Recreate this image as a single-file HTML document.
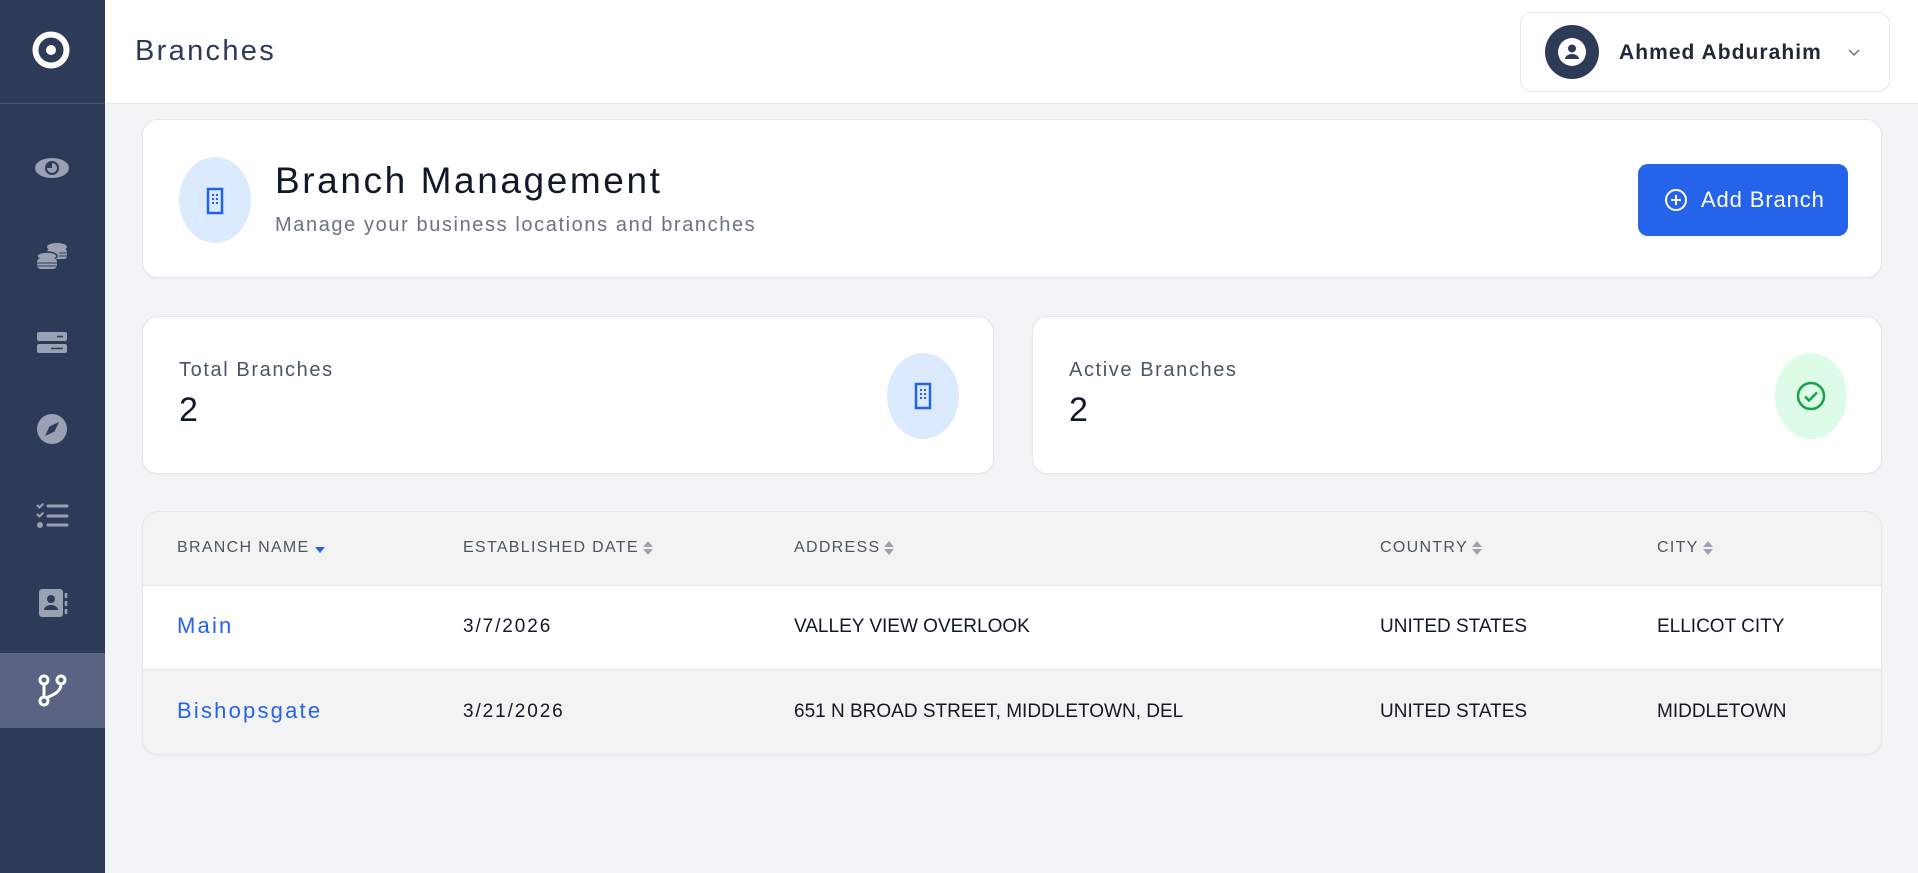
<!DOCTYPE html>
<html><head><meta charset="utf-8"><style>
*{box-sizing:border-box;margin:0;padding:0}
body{width:1918px;height:873px;overflow:hidden;background:#f3f4f6;font-family:"Liberation Sans",sans-serif;position:relative}
.sb{position:absolute;left:0;top:0;width:105px;height:873px;background:#2d3a58}
.sb .div{position:absolute;left:0;top:103px;width:105px;height:1px;background:#4a5675}
.sb .act{position:absolute;left:0;top:653px;width:105px;height:75px;background:#586481}
.ic{position:absolute;left:33px;width:38px;height:38px}
.hdr{position:absolute;left:105px;top:0;right:0;height:104px;background:#fff;border-bottom:1px solid #e5e7eb}
.card{position:absolute;background:#fff;border:1px solid #e5e7eb;border-radius:16px;box-shadow:0 1px 2px rgba(0,0,0,.04)}
.pill{position:absolute;border-radius:50%/50%}
.col{position:absolute;white-space:nowrap}
.h{font-size:16px;color:#4b5563;letter-spacing:1.3px;top:538px;display:flex;align-items:center;height:20px}
.h svg{margin-left:3px}
.r{font-size:19px;color:#111827}
.lnk{font-size:22px;color:#2563eb;letter-spacing:.1em}
.ls{letter-spacing:.08em}
.dt{letter-spacing:.1em}
</style></head><body>
<div class="sb">
 <svg class="ic" style="left:32px;top:31px" viewBox="0 0 38 38"><circle cx="19" cy="19" r="15.5" fill="none" stroke="#fff" stroke-width="6"/><circle cx="19" cy="19" r="5" fill="#fff"/></svg>
 <div class="div"></div>
 <div class="act"></div>
 <svg class="ic" style="top:149px" viewBox="0 0 38 38"><ellipse cx="19" cy="19" rx="17" ry="10" fill="#9aa1b2"/><circle cx="19" cy="19" r="7" fill="#2d3a58"/><path d="M19 14a5 5 0 1 1-5 5h5z" fill="#9aa1b2"/></svg>
 <svg class="ic" style="top:237px" viewBox="0 0 38 38"><ellipse cx="24" cy="10" rx="10" ry="4" fill="#9aa1b2"/><rect x="14" y="12" width="20" height="10" rx="3" fill="#9aa1b2"/><ellipse cx="14" cy="19" rx="10" ry="4" fill="#9aa1b2" stroke="#2d3a58" stroke-width="1.5"/><rect x="4" y="21" width="20" height="11" rx="4" fill="#9aa1b2"/><path d="M4 26h20M4 29h20M26 16h8M26 19h8" stroke="#2d3a58" stroke-width="1"/></svg>
 <svg class="ic" style="top:324px" viewBox="0 0 38 38"><rect x="4" y="8" width="30" height="9" rx="2" fill="#9aa1b2"/><rect x="4" y="20" width="30" height="9" rx="2" fill="#9aa1b2"/><path d="M24 12.5h6M18 24.5h12" stroke="#2d3a58" stroke-width="1.5"/></svg>
 <svg class="ic" style="top:410px" viewBox="0 0 38 38"><circle cx="19" cy="19" r="15" fill="#9aa1b2"/><path d="M26 12 L21.5 21.5 L12 26 L16.5 16.5Z" fill="#2d3a58"/></svg>
 <svg class="ic" style="top:497px" viewBox="0 0 38 38"><path d="M4 8l2.5 2.5 4-4M4 17l2.5 2.5 4-4" stroke="#9aa1b2" stroke-width="2" fill="none"/><circle cx="7" cy="28" r="3" fill="#9aa1b2"/><path d="M15 9h19M15 19h19M15 28h19" stroke="#9aa1b2" stroke-width="3" stroke-linecap="round"/></svg>
 <svg class="ic" style="top:584px" viewBox="0 0 38 38"><rect x="6" y="5" width="24" height="28" rx="3" fill="#9aa1b2"/><circle cx="18" cy="15" r="4" fill="#2d3a58"/><path d="M11 26a7 5 0 0 1 14 0z" fill="#2d3a58"/><path d="M33 9v5M33 17v5M33 25v5" stroke="#9aa1b2" stroke-width="2.5"/></svg>
 <svg class="ic" style="top:671px" viewBox="0 0 38 38"><circle cx="11" cy="9" r="4" fill="none" stroke="#fff" stroke-width="3"/><circle cx="11" cy="30" r="4" fill="none" stroke="#fff" stroke-width="3"/><circle cx="28" cy="9" r="4" fill="none" stroke="#fff" stroke-width="3"/><path d="M11 13v13M28 13c0 8-8 11-15 14" stroke="#fff" stroke-width="3" fill="none"/></svg>
</div>
<div class="hdr">
 <div class="ls" style="position:absolute;left:30px;top:35px;font-size:29px;color:#2d3a58">Branches</div>
 <div style="position:absolute;left:1415px;top:12px;width:370px;height:80px;border:1px solid #e5e7eb;border-radius:12px">
  <div style="position:absolute;left:24px;top:12px;width:54px;height:54px;border-radius:50%;background:#2d3a58"></div>
  <svg style="position:absolute;left:36px;top:24px" width="30" height="30" viewBox="0 0 30 30"><circle cx="15" cy="15" r="14" fill="#fff"/><circle cx="15" cy="11.5" r="4" fill="#2d3a58"/><path d="M8 22a7 5 0 0 1 14 0z" fill="#2d3a58"/></svg>
  <div style="position:absolute;left:98px;top:28px;font-size:21px;font-weight:bold;color:#1f2937;letter-spacing:.05em">Ahmed Abdurahim</div>
  <svg style="position:absolute;left:327px;top:36px" width="12" height="8" viewBox="0 0 12 8"><path d="M1 1l5 5 5-5" stroke="#6b7280" stroke-width="1.5" fill="none"/></svg>
 </div>
</div>
<div class="card" style="left:142px;top:119px;width:1740px;height:159px">
 <div class="pill" style="left:36px;top:37px;width:72px;height:86px;background:#dbeafe"></div>
 <svg style="position:absolute;left:60px;top:67px" width="24" height="28" viewBox="0 0 24 28"><rect x="5" y="2" width="14" height="24" fill="none" stroke="#2563eb" stroke-width="2.5"/><path d="M9 8h2M13 8h2M9 12h2M13 12h2M9 16h2M13 16h2" stroke="#2563eb" stroke-width="2"/></svg>
 <div style="position:absolute;left:132px;top:40px;font-size:37px;color:#111827;letter-spacing:.07em">Branch Management</div>
 <div class="ls" style="position:absolute;left:132px;top:94px;font-size:20px;color:#6b7280">Manage your business locations and branches</div>
 <div style="position:absolute;left:1495px;top:44px;width:210px;height:72px;background:#2563eb;border-radius:10px;color:#fff;font-size:22px">
  <svg style="position:absolute;left:26px;top:24px" width="24" height="24" viewBox="0 0 24 24"><circle cx="12" cy="12" r="10" fill="none" stroke="#fff" stroke-width="2"/><path d="M12 7v10M7 12h10" stroke="#fff" stroke-width="2"/></svg>
  <div style="position:absolute;left:63px;top:23px;letter-spacing:.04em">Add Branch</div>
 </div>
</div>
<div class="card" style="left:142px;top:316px;width:852px;height:158px">
 <div class="ls" style="position:absolute;left:36px;top:42px;font-size:20px;color:#4b5563">Total Branches</div>
 <div style="position:absolute;left:36px;top:74px;font-size:34px;color:#111827">2</div>
 <div class="pill" style="left:744px;top:36px;width:72px;height:86px;background:#dbeafe"></div>
 <svg style="position:absolute;left:768px;top:65px" width="24" height="28" viewBox="0 0 24 28"><rect x="5" y="2" width="14" height="24" fill="none" stroke="#2563eb" stroke-width="2.5"/><path d="M9 8h2M13 8h2M9 12h2M13 12h2M9 16h2M13 16h2" stroke="#2563eb" stroke-width="2"/></svg>
</div>
<div class="card" style="left:1032px;top:316px;width:850px;height:158px">
 <div class="ls" style="position:absolute;left:36px;top:42px;font-size:20px;color:#4b5563">Active Branches</div>
 <div style="position:absolute;left:36px;top:74px;font-size:34px;color:#111827">2</div>
 <div class="pill" style="left:742px;top:36px;width:72px;height:86px;background:#dcfce7"></div>
 <svg style="position:absolute;left:762px;top:63px" width="32" height="32" viewBox="0 0 32 32"><circle cx="16" cy="16" r="13" fill="none" stroke="#16a34a" stroke-width="2.5"/><path d="M10 16.5l4 4 8-8" stroke="#16a34a" stroke-width="2.5" fill="none"/></svg>
</div>
<div class="card" style="left:142px;top:511px;width:1740px;height:244px;overflow:hidden;background:#f3f3f3">
 <div style="position:absolute;left:0;top:73px;width:100%;height:85px;background:#fff;border-top:1px solid #e5e7eb;border-bottom:1px solid #e5e7eb"></div>
</div>
<div class="col h" style="left:177px">BRANCH NAME<svg width="14" height="14" viewBox="0 0 14 14"><path d="M2 6h10l-5 6z" fill="#2563eb"/></svg></div>
<div class="col h" style="left:463px">ESTABLISHED DATE<svg width="12" height="16" viewBox="0 0 12 16"><path d="M1 7h10L6 1zM1 9h10l-5 6z" fill="#9ca3af"/></svg></div>
<div class="col h" style="left:794px">ADDRESS<svg width="12" height="16" viewBox="0 0 12 16"><path d="M1 7h10L6 1zM1 9h10l-5 6z" fill="#9ca3af"/></svg></div>
<div class="col h" style="left:1380px">COUNTRY<svg width="12" height="16" viewBox="0 0 12 16"><path d="M1 7h10L6 1zM1 9h10l-5 6z" fill="#9ca3af"/></svg></div>
<div class="col h" style="left:1657px">CITY<svg width="12" height="16" viewBox="0 0 12 16"><path d="M1 7h10L6 1zM1 9h10l-5 6z" fill="#9ca3af"/></svg></div>
<div class="col lnk" style="left:177px;top:613px">Main</div>
<div class="col r dt" style="left:463px;top:616px">3/7/2026</div>
<div class="col r" style="left:794px;top:616px">VALLEY VIEW OVERLOOK</div>
<div class="col r" style="left:1380px;top:616px">UNITED STATES</div>
<div class="col r" style="left:1657px;top:616px">ELLICOT CITY</div>
<div class="col lnk" style="left:177px;top:698px">Bishopsgate</div>
<div class="col r dt" style="left:463px;top:701px">3/21/2026</div>
<div class="col r" style="left:794px;top:701px">651 N BROAD STREET, MIDDLETOWN, DEL</div>
<div class="col r" style="left:1380px;top:701px">UNITED STATES</div>
<div class="col r" style="left:1657px;top:701px">MIDDLETOWN</div>
</body></html>
